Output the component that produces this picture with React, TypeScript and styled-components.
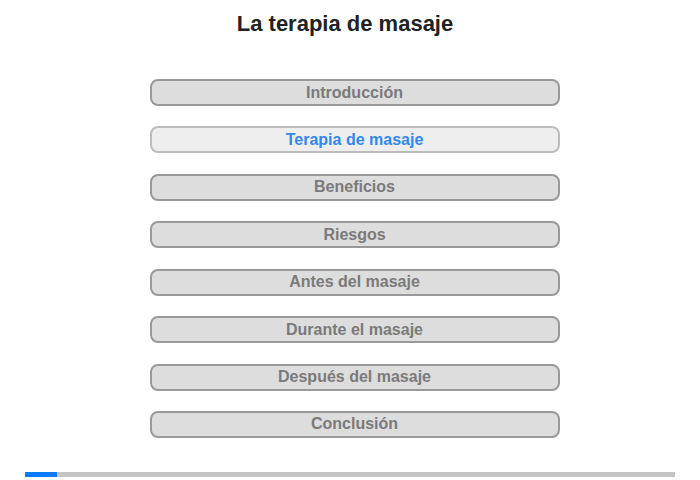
import React from "react";
import styled, { createGlobalStyle } from "styled-components";

const Global = createGlobalStyle`
  html, body { margin: 0; padding: 0; background: #fff; }
  body { font-family: "Liberation Sans", Arial, sans-serif; }
`;

const Page = styled.div`
  width: 700px;
  height: 480px;
  display: flex;
  flex-direction: column;
  align-items: center;
  box-sizing: border-box;
  padding-top: 11px;
`;

const Title = styled.h1`
  margin: 0 10px 0 0;
  font-size: 22px;
  line-height: 25px;
  font-weight: bold;
  color: #222;
`;

const Menu = styled.nav`
  margin-top: 43px;
  margin-left: 9px;
  width: 410px;
  display: flex;
  flex-direction: column;
  gap: 20.43px;
`;

const Item = styled.div<{ $active?: boolean }>`
  box-sizing: border-box;
  height: 27px;
  border-radius: 8px;
  border: 2px solid ${(p) => (p.$active ? "#bcbcbc" : "#999")};
  background: ${(p) => (p.$active ? "#eee" : "#ddd")};
  color: ${(p) => (p.$active ? "#3388ee" : "#7a7a7a")};
  font-size: 16px;
  font-weight: bold;
  display: flex;
  align-items: center;
  justify-content: center;
  line-height: 1;
`;

const Progress = styled.div`
  margin-top: auto;
  margin-bottom: 3px;
  width: 650px;
  height: 5px;
  background: #c4c4c4;
  display: flex;
`;

const Fill = styled.div`
  height: 100%;
  background: #0a7bff;
`;

const items = [
  "Introducción",
  "Terapia de masaje",
  "Beneficios",
  "Riesgos",
  "Antes del masaje",
  "Durante el masaje",
  "Después del masaje",
  "Conclusión",
];

export default function App() {
  return (
    <>
      <Global />
      <Page>
        <Title>La terapia de masaje</Title>
        <Menu>
          {items.map((t, i) => (
            <Item key={t} $active={i === 1}>
              {t}
            </Item>
          ))}
        </Menu>
        <Progress>
          <Fill style={{ width: `${(32 / 650) * 100}%` }} />
        </Progress>
      </Page>
    </>
  );
}
